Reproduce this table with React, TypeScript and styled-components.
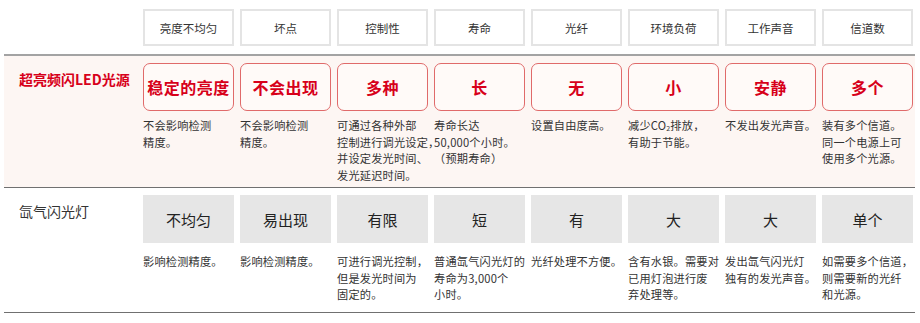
import React from 'react'
import styled, { createGlobalStyle, css } from 'styled-components'

const GlobalStyle = createGlobalStyle`
  html, body {
    margin: 0;
    padding: 0;
    background: #ffffff;
  }
  body {
    font-family: "Noto Sans CJK SC", "Noto Sans", "Liberation Sans", sans-serif;
    color: #333333;
  }
`

type Kind = 'led' | 'xenon'

const Sub = styled.sub`
  font-size: 7px;
  vertical-align: -1px;
  line-height: 0;
`

const headers = ['亮度不均匀', '坏点', '控制性', '寿命', '光纤', '环境负荷', '工作声音', '信道数']

const ledCells: { value: string; desc: React.ReactNode[] }[] = [
  { value: '稳定的亮度', desc: ['不会影响检测', '精度。'] },
  { value: '不会出现', desc: ['不会影响检测', '精度。'] },
  { value: '多种', desc: ['可通过各种外部', '控制进行调光设定，', '并设定发光时间、', '发光延迟时间。'] },
  { value: '长', desc: ['寿命长达', '50,000个小时。', '（预期寿命）'] },
  { value: '无', desc: ['设置自由度高。'] },
  { value: '小', desc: [<>减少CO<Sub>2</Sub>排放，</>, '有助于节能。'] },
  { value: '安静', desc: ['不发出发光声音。'] },
  { value: '多个', desc: ['装有多个信道。', '同一个电源上可', '使用多个光源。'] },
]

const xenonCells: { value: string; desc: React.ReactNode[] }[] = [
  { value: '不均匀', desc: ['影响检测精度。'] },
  { value: '易出现', desc: ['影响检测精度。'] },
  { value: '有限', desc: ['可进行调光控制，', '但是发光时间为', '固定的。'] },
  { value: '短', desc: ['普通氙气闪光灯的', '寿命为3,000个', '小时。'] },
  { value: '有', desc: ['光纤处理不方便。'] },
  { value: '大', desc: ['含有水银。需要对', '已用灯泡进行废', '弃处理等。'] },
  { value: '大', desc: ['发出氙气闪光灯', '独有的发光声音。'] },
  { value: '单个', desc: ['如需要多个信道，', '则需要新的光纤', '和光源。'] },
]

function DataRow({ kind, label, cells }: { kind: Kind; label: string; cells: typeof ledCells }) {
  return (
    <Row $kind={kind}>
      <Label $kind={kind}>{label}</Label>
      {cells.map((c, i) => (
        <Cell key={i} $kind={kind}>
          <ValueBox $kind={kind}>{c.value}</ValueBox>
          <Desc>
            {c.desc.map((line, j) => (
              <DescLine key={j}>{line}</DescLine>
            ))}
          </Desc>
        </Cell>
      ))}
    </Row>
  )
}

export default function App() {
  return (
    <>
      <GlobalStyle />
      <Table>
        <HeadRow>
          <span />
          {headers.map((h) => (
            <HeadBox key={h}>{h}</HeadBox>
          ))}
        </HeadRow>
        <DataRow kind="led" label="超亮频闪LED光源" cells={ledCells} />
        <DataRow kind="xenon" label="氙气闪光灯" cells={xenonCells} />
      </Table>
    </>
  )
}

const Table = styled.div`
  margin-left: 4px;
  width: 911px;
`

const gridCols = css`
  display: grid;
  grid-template-columns: 133px repeat(8, 91px);
  column-gap: 6px;
`

const HeadRow = styled.div`
  ${gridCols}
  padding: 9px 0 8px;
  border-bottom: 2px solid #a3a3a3;
`

const HeadBox = styled.div`
  display: flex;
  align-items: center;
  justify-content: center;
  height: 37px;
  box-sizing: border-box;
  border: 2px solid #e4e4e4;
  background: #ffffff;
  font-size: 11.5px;
  color: #333333;
`

const Row = styled.div<{ $kind: Kind }>`
  ${gridCols}
  box-sizing: border-box;
  padding-top: 7px;
  height: ${(p) => (p.$kind === 'led' ? '132px' : '125px')};
  background: ${(p) => (p.$kind === 'led' ? '#fdf6f3' : '#ffffff')};
  border-bottom: 1.5px solid #707070;
`

const Label = styled.div<{ $kind: Kind }>`
  padding: 8px 0 0 15px;
  font-size: 14px;
  line-height: 16px;
  white-space: nowrap;
  font-weight: ${(p) => (p.$kind === 'led' ? 700 : 400)};
  color: ${(p) => (p.$kind === 'led' ? '#d7001a' : '#333333')};
`

const Cell = styled.div<{ $kind: Kind }>`
  display: flex;
  flex-direction: column;
  gap: ${(p) => (p.$kind === 'led' ? '6px' : '10px')};
`

const ValueBox = styled.div<{ $kind: Kind }>`
  display: flex;
  align-items: center;
  justify-content: center;
  height: 48px;
  box-sizing: border-box;
  ${(p) =>
    p.$kind === 'led'
      ? css`
          border: 1.5px solid #e06a6a;
          border-radius: 7px;
          background: #fffaf8;
          color: #d7001a;
          font-size: 16px;
          font-weight: 700;
          letter-spacing: 0.5px;
        `
      : css`
          background: #e6e6e6;
          color: #222222;
          font-size: 15px;
        `}
`

const Desc = styled.div`
  font-size: 11.2px;
  letter-spacing: 0.2px;
  line-height: 16.5px;
  color: #333333;
`

const DescLine = styled.div`
  white-space: nowrap;
`
